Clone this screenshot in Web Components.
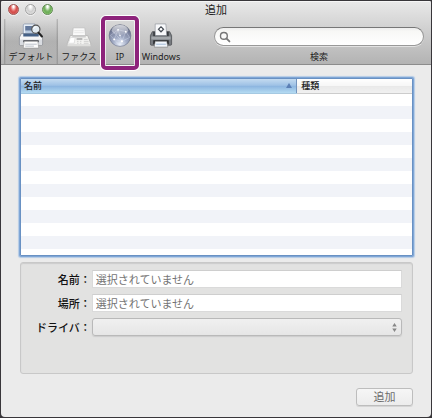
<!DOCTYPE html>
<html lang="ja">
<head>
<meta charset="utf-8">
<title>追加</title>
<style>
html, body { margin: 0; height: 100%; background: #38363a; }
body { font-family: "Noto Sans", "Noto Sans CJK JP", sans-serif; color: #222; }
</style>
</head>
<body>
<add-printer-window></add-printer-window>
<script>
class BaseElement extends HTMLElement {
  connectedCallback() {
    if (this.shadowRoot) return;
    this.attachShadow({ mode: 'open' }).innerHTML = this.render();
  }
}

customElements.define('title-bar', class extends BaseElement {
  render() {
    return `<style>
:host { display: grid; grid-template-columns: 1fr auto 1fr; align-items: center; height: 17px; padding: 0 7px 1px; }
.lights { display: flex; gap: 6px; }
button { box-sizing: border-box; width: 11px; height: 11px; padding: 0; border: 1px solid #8888; border-radius: 50%; box-shadow: 0 1px #fff8; }
.close { border-color: #a05553; background: radial-gradient(ellipse at 50% 15%, #fff 0 10%, #e0605d 45%, #d14c4a 60%, #ff9a93 100%); }
.min { border-color: #a2a2a2; background: radial-gradient(ellipse at 50% 15%, #fff 0 10%, #cfcfcf 50%, #efefef 100%); }
.zoom { border-color: #618a54; background: radial-gradient(ellipse at 50% 15%, #fff 0 10%, #7ab465 45%, #6cae57 60%, #c1f09f 100%); }
h1 { margin: 0; font-size: 11px; line-height: 16px; font-weight: 400; }
</style>
<div class="lights"><button class="close" aria-label="閉じる"></button><button class="min" aria-label="しまう"></button><button class="zoom" aria-label="拡大"></button></div>
<h1><slot></slot></h1>`;
  }
});

customElements.define('tool-item', class extends BaseElement {
  render() {
    return `<style>
:host { display: block; position: relative; }
button { display: flex; flex-direction: column; align-items: center; width: 100%; height: 45px; padding: 4px 0 0; border: 0; background: none; color: #222; font: inherit; font-size: 9px; line-height: 14px; white-space: nowrap; }
:host([selected]) button { background: linear-gradient(90deg, #6666, #8880 4%, #8880 96%, #6666), linear-gradient(#8880, #8885 50%, #9991); }
::slotted(svg) { display: block; width: 26px; height: 28px; }
.mark { display: none; }
:host([marked]) .mark { display: block; position: absolute; inset: -3px 1px -6px 1px; border: 4px solid #8d237b; border-radius: 5px; box-shadow: 0 0 0 1px #fff, inset 0 0 0 1px #fffa; pointer-events: none; z-index: 2; }
</style>
<button><slot name="icon"></slot><span><slot></slot></span></button><div class="mark"></div>`;
  }
});

customElements.define('search-box', class extends BaseElement {
  render() {
    return `<style>
:host { display: flex; flex-direction: column; align-items: center; gap: 4px; }
.field { position: relative; width: 100%; }
input { display: block; box-sizing: border-box; width: 100%; height: 19px; padding: 0 8px 0 20px; border: 1px solid #999; border-top-color: #777; border-radius: 10px; background: linear-gradient(#eee, #f8f8f6 20%, #fff); box-shadow: 0 1px #fff8; font: inherit; font-size: 11px; outline: 0; appearance: none; }
svg { position: absolute; left: 5px; top: 4px; width: 12px; height: 12px; }
label { font-size: 9px; line-height: 14px; }
</style>
<div class="field"><input id="q" type="search"><svg viewBox="0 0 13 13" aria-hidden="true"><circle cx="5.3" cy="5.3" r="3.7" fill="none" stroke="#777" stroke-width="1.5"/><path d="M8 8l3.3 3.3" stroke="#777" stroke-width="2" stroke-linecap="round"/></svg></div>
<label for="q"><slot></slot></label>`;
  }
});

customElements.define('printer-list', class extends BaseElement {
  render() {
    return `<style>
:host { display: block; box-sizing: border-box; border: 1px solid #6991c3; border-radius: 1px; box-shadow: 0 0 0 1px #7fa6d6, 0 0 1px 2px #b4cbe6; background: repeating-linear-gradient(#fff 0 13px, #f1f3f8 13px 26px) 0 14px no-repeat #fff; overflow: hidden; }
table { width: 100%; border-collapse: collapse; table-layout: fixed; font-size: 9px; }
th { height: 14px; padding: 0 4px; text-align: left; font-weight: 500; line-height: 13px; box-sizing: border-box; background: linear-gradient(#fff, #f6f6f6 48%, #e9e9e9 52%, #f0f0f0); border-bottom: 1px solid #ccc; font-family: "Noto Sans CJK JP", sans-serif; }
th:first-child { width: 70.5%; padding-left: 3px; background: linear-gradient(#c4dbf0, #9fc2e6 45%, #8db6e0 52%, #b4dbf2); border-right: 1px solid #7494bd; border-bottom-color: #a5c9e2; }
.head { display: flex; justify-content: space-between; align-items: center; }
svg { width: 6px; height: 5px; }
</style>
<table><thead><tr><th scope="col" aria-sort="ascending"><div class="head"><span>名前</span><svg viewBox="0 0 6 5" aria-hidden="true"><path d="M3 0L6 5H0z" fill="#5b7fb5"/></svg></div></th><th scope="col">種類</th></tr></thead></table>`;
  }
});

customElements.define('printer-form', class extends BaseElement {
  render() {
    return `<style>
:host { display: grid; grid-template-columns: auto 1fr; align-content: start; box-sizing: border-box; min-height: 112px; padding: 7px 10px 7px 15px; gap: 6px 1px; border: 1px solid #c8c8c8; border-radius: 3px; background: #e2e2e1; box-shadow: inset 0 1px 1px #ccc; font-size: 11px; font-family: "Noto Sans CJK JP", sans-serif; }
label { text-align: right; line-height: 18px; font-weight: 500; white-space: nowrap; color: #111; }
input, select { display: block; box-sizing: border-box; width: 100%; height: 18px; min-width: 0; font: inherit; outline: 0; }
input { padding: 0 3px; border: 1px solid #dadada; border-top-color: #cecece; background: #fff; color: #737373; }
.pick { position: relative; }
select { appearance: none; padding: 0 16px 0 4px; border: 1px solid #b9b9b9; border-radius: 3px; background: linear-gradient(#f0f0f0, #e6e6e6); box-shadow: 0 1px 1px #ccc; }
svg { position: absolute; right: 5px; top: 5px; width: 5px; height: 9px; pointer-events: none; }
</style>
<label for="n">名前：</label><input id="n" value="選択されていません" readonly>
<label for="l">場所：</label><input id="l" value="選択されていません" readonly>
<label for="d">ドライバ：</label><div class="pick"><select id="d"><option></option></select><svg viewBox="0 0 5 10" aria-hidden="true"><path d="M2.500 0L5 4H0zM2.500 10L5 6H0z" fill="#888"/></svg></div>`;
  }
});

customElements.define('push-button', class extends BaseElement {
  render() {
    return `<style>
:host { display: block; }
button { display: block; min-width: 57px; height: 18px; padding: 0 12px; border: 1px solid #bdbdbd; border-radius: 3px; background: linear-gradient(#f6f6f6, #ececec); box-shadow: 0 1px #d5d5d5; color: #6c6c6c; font: inherit; font-size: 11px; line-height: 16px; }
</style><button><slot></slot></button>`;
  }
});

customElements.define('add-printer-window', class extends BaseElement {
  render() {
    return `<style>
:host { display: block; box-sizing: border-box; height: 100vh; min-height: 340px; padding: 1px; }
.window { display: flex; flex-direction: column; height: 100%; border-radius: 2px 2px 4px 4px; background: #ebebeb; overflow: hidden; }
header { border-bottom: 1px solid #8c8c8c; background: linear-gradient(#e9e9e9, #d0d0d0 45%, #b3b3b3); box-shadow: inset 0 1px #f6f6f6; }
nav { display: grid; grid-template-columns: 54px 42px 40px 42px 1fr; padding-left: 3px; }
search-box { margin: 8px 7px 0 32px; }
main { display: flex; flex: 1; flex-direction: column; min-height: 0; padding: 13px 18px 11px 19px; gap: 6px; }
printer-list { flex: 1; }
footer { display: flex; justify-content: flex-end; padding-top: 8px; }
</style>
<div class="window">
<header>
<title-bar>追加</title-bar>
<nav>
<tool-item selected>デフォルト
<svg slot="icon" viewBox="0 0 26 28" aria-hidden="true">
<path d="M5 2l1-1h11l1 13H5z" fill="#e6edf5" stroke="#8191aa" stroke-width=".7"/><path d="M7 3h9v5H7z" fill="#63799c"/><path d="M7 8h10v4H7z" fill="#b9cbe0"/>
<path d="M3 11h20l2 4v7q0 1-1 1H2q-1 0-1-1v-7z" fill="#f5f6f7" stroke="#777c84" stroke-width=".7"/>
<path d="M5 11h16v3H5z" fill="#446187"/><path d="M1.500 17h23v5h-23z" fill="#d9dce1"/><path d="M5 18h16v2H5z" fill="#3a3d43"/>
<path d="M6 19h14l1 7H5z" fill="#fdfdfd" stroke="#888" stroke-width=".5"/><path d="M7 22h12M7 24h9" stroke="#aab2bd" stroke-width=".8"/>
<circle cx="18" cy="6.500" r="4.300" fill="#e6f0f6" fill-opacity=".9" stroke="#555" stroke-width="1.200"/><path d="M15.500 6q1-2.500 3-2" fill="none" stroke="#fff"/><path d="M20.800 10l3.500 4" stroke="#222" stroke-width="2.200" stroke-linecap="round"/>
</svg></tool-item>
<tool-item>ファクス
<svg slot="icon" viewBox="0 0 26 28" aria-hidden="true">
<path d="M7 5h12l1 10H6z" fill="#fafafa" stroke="#bbb" stroke-width=".7"/><path d="M8 8h10M8 10h10" stroke="#e8e8e8"/>
<path d="M4 13h18l3 8v2H1v-2z" fill="#f3f3f1" stroke="#aaa" stroke-width=".7"/><path d="M6 13h14v2H6z" fill="#ccc"/>
<path d="M4 15h5l-1 6H2z" fill="#fff" stroke="#d0d0d0" stroke-width=".6"/><path d="M10.500 15.500h6v2h-6z" fill="#b8b8b8"/>
<path d="M11 19h1.500M14 19h1.500M11 21h1.500M14 21h1.500M18 17h4M18 19h5M18 21h5" stroke="#c4c4c4" stroke-width=".8"/><path d="M1 22h24v2H1z" fill="#dededc"/>
</svg></tool-item>
<tool-item marked>IP
<svg slot="icon" viewBox="0 0 26 28" aria-hidden="true">
<defs><radialGradient id="g" cx=".5" cy=".9" r=".9"><stop offset="0" stop-color="#e8eef8"/><stop offset=".35" stop-color="#a4aec7"/><stop offset=".75" stop-color="#777f9b"/><stop offset="1" stop-color="#4f566e"/></radialGradient><linearGradient id="s" x2="0" y2="1"><stop stop-color="#fff" stop-opacity=".75"/><stop offset="1" stop-color="#fff" stop-opacity=".1"/></linearGradient></defs>
<circle cx="13" cy="13" r="11.300" fill="url(#g)" stroke="#6a7188" stroke-width=".6"/>
<path d="M3 13l8-6 8 2 4 6-8 4-8-2-4-4M11 7l4 12 4-10M7 17l4-10M7 17l5 6 3-4M5 8l10 11" fill="none" stroke="#e1e8f8" stroke-width=".5" stroke-opacity=".7"/>
<ellipse cx="13" cy="7.500" rx="8.500" ry="5.300" fill="url(#s)"/>
<g fill="#fff"><circle cx="11" cy="7" r=".9"/><circle cx="19" cy="9" r=".9"/><circle cx="7" cy="17" r="1"/><circle cx="15" cy="19" r="1.200"/><circle cx="13" cy="13" r=".8"/></g>
</svg></tool-item>
<tool-item>Windows
<svg slot="icon" viewBox="0 0 26 28" aria-hidden="true">
<path d="M4 9h18l2 4v9q0 1-1 1H3q-1 0-1-1v-9z" fill="#777b80" stroke="#4b4e52" stroke-width=".8"/>
<path d="M5 9h16v5H5z" fill="#34373b"/><path d="M7 1h11l1 12H7z" fill="#f8f9fb" stroke="#848991" stroke-width=".6"/>
<path d="M13 3l3.500 3.500L13 10 9.500 6.500z" fill="#464c54"/><circle cx="13" cy="6.500" r="1.300" fill="#fff"/>
<path d="M3 14h20v3H3z" fill="#a4a8ac"/><path d="M5 18h16v4H5z" fill="#25272a"/>
<path d="M7 19h12l1 6H6z" fill="#f1f6fc" stroke="#777" stroke-width=".6"/><path d="M8 22h10" stroke="#9fb8d3"/>
</svg></tool-item>
<search-box>検索</search-box>
</nav>
</header>
<main>
<printer-list></printer-list>
<printer-form></printer-form>
<footer><push-button>追加</push-button></footer>
</main>
</div>`;
  }
});
</script>
</body>
</html>
